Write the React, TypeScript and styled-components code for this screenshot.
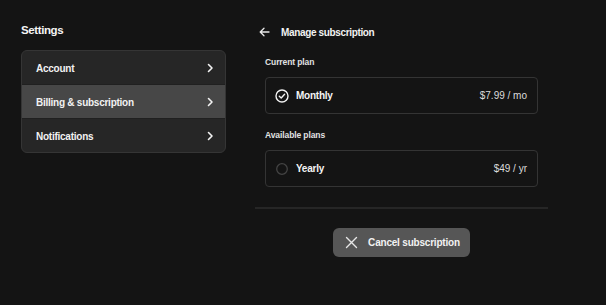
import styled, { createGlobalStyle } from 'styled-components';

const GlobalStyle = createGlobalStyle`
  html, body {
    margin: 0;
    padding: 0;
    background: #141414;
  }
  body {
    font-family: 'Liberation Sans', Arial, sans-serif;
    color: #f2f2f2;
    letter-spacing: -0.25px;
    -webkit-font-smoothing: antialiased;
  }
`;

const Page = styled.div`
  display: flex;
  gap: 29px;
  width: 606px;
  height: 305px;
  box-sizing: border-box;
  padding: 20px 0 0 21px;
  background: #141414;
`;

const Sidebar = styled.aside`
  width: 205px;
  flex-shrink: 0;
`;

const Title = styled.h1`
  margin: 0 0 10px;
  font-size: 11.5px;
  line-height: 20px;
  font-weight: 700;
  letter-spacing: -0.4px;
  color: #f4f4f4;
`;

const Menu = styled.nav`
  display: flex;
  flex-direction: column;
  background: #262626;
  border: 1px solid #353535;
  border-radius: 6px;
  overflow: hidden;
`;

const MenuRow = styled.div<{ $active?: boolean }>`
  display: flex;
  align-items: center;
  justify-content: space-between;
  height: 34px;
  padding: 1px 11px 0 14px;
  box-sizing: border-box;
  background: ${({ $active }) => ($active ? '#474747' : 'transparent')};
  border-top: 1px solid #202020;
  font-size: 10px;
  font-weight: 700;
  color: #f2f2f2;

  &:first-child {
    border-top: none;
    height: 33px;
  }
`;

const Main = styled.main`
  width: 293px;
  flex-shrink: 0;
  display: flex;
  flex-direction: column;
`;

const Header = styled.div`
  display: flex;
  align-items: center;
  gap: 11px;
  height: 24px;
  padding-left: 4px;
  font-size: 10px;
  font-weight: 700;
  letter-spacing: -0.35px;
  color: #f2f2f2;
`;

const Section = styled.section`
  display: flex;
  flex-direction: column;
  padding: 0 10px;
`;

const Label = styled.div<{ $top: number }>`
  margin-top: ${({ $top }) => $top}px;
  margin-bottom: 9px;
  font-size: 8.5px;
  line-height: 12px;
  font-weight: 700;
  letter-spacing: -0.1px;
  color: #e2e2e2;
`;

const PlanCard = styled.div`
  display: flex;
  align-items: center;
  height: 37px;
  box-sizing: border-box;
  padding: 0 10px 0 9px;
  border: 1px solid #343434;
  border-radius: 4px;
`;

const PlanName = styled.span`
  flex: 1;
  margin-left: 7px;
  font-size: 10px;
  font-weight: 700;
  color: #f4f4f4;
`;

const Price = styled.span`
  font-size: 10px;
  letter-spacing: 0;
  color: #dcdcdc;
`;

const Divider = styled.hr`
  width: 100%;
  margin: 20px 0 0;
  border: none;
  height: 2px;
  background: #262626;
`;

const Actions = styled.div`
  display: flex;
  justify-content: center;
  padding-top: 19px;
`;

const CancelButton = styled.button`
  display: flex;
  align-items: center;
  gap: 10px;
  height: 29px;
  padding: 0 10px 0 12px;
  border: none;
  border-radius: 6px;
  background: #565656;
  color: #f2f2f2;
  font-family: inherit;
  font-size: 10px;
  font-weight: 700;
  letter-spacing: -0.2px;
  cursor: pointer;
`;

const Chevron = () => (
  <svg width="8" height="10" viewBox="0 0 8 10" fill="none">
    <path d="M2.5 1.5 6 5 2.5 8.5" stroke="#f2f2f2" strokeWidth="1.6" strokeLinecap="round" strokeLinejoin="round" />
  </svg>
);

const BackArrow = () => (
  <svg width="11" height="10" viewBox="0 0 11 10" fill="none">
    <path d="M10 5H1.5M5 1.2 1.2 5 5 8.8" stroke="#e8e8e8" strokeWidth="1.3" strokeLinecap="round" strokeLinejoin="round" />
  </svg>
);

const CheckCircle = () => (
  <svg width="14" height="14" viewBox="0 0 14 14" fill="none">
    <circle cx="7" cy="7" r="6" stroke="#f2f2f2" strokeWidth="1.4" />
    <path d="M4.3 7.2 6.2 9 9.6 5.2" stroke="#f2f2f2" strokeWidth="1.4" strokeLinecap="round" strokeLinejoin="round" />
  </svg>
);

const Radio = () => (
  <svg width="14" height="14" viewBox="0 0 14 14" fill="none">
    <circle cx="7" cy="7" r="5.3" stroke="#444" strokeWidth="1.3" />
  </svg>
);

const CloseIcon = () => (
  <svg width="13" height="13" viewBox="0 0 13 13" fill="none">
    <path d="M1.5 1.5 11.5 11.5M11.5 1.5 1.5 11.5" stroke="#e6e6e6" strokeWidth="1.4" strokeLinecap="round" />
  </svg>
);

const menuItems = [
  { label: 'Account' },
  { label: 'Billing & subscription', active: true },
  { label: 'Notifications' },
];

const App = () => {
  return (
    <>
      <GlobalStyle />
      <Page>
        <Sidebar>
          <Title>Settings</Title>
          <Menu>
            {menuItems.map((item) => (
              <MenuRow key={item.label} $active={item.active}>
                <span>{item.label}</span>
                <Chevron />
              </MenuRow>
            ))}
          </Menu>
        </Sidebar>

        <Main>
          <Header>
            <BackArrow />
            <span>Manage subscription</span>
          </Header>

          <Section>
            <Label $top={12}>Current plan</Label>
            <PlanCard>
              <CheckCircle />
              <PlanName>Monthly</PlanName>
              <Price>$7.99 / mo</Price>
            </PlanCard>

            <Label $top={15}>Available plans</Label>
            <PlanCard>
              <Radio />
              <PlanName>Yearly</PlanName>
              <Price>$49 / yr</Price>
            </PlanCard>
          </Section>

          <Divider />

          <Actions>
            <CancelButton>
              <CloseIcon />
              Cancel subscription
            </CancelButton>
          </Actions>
        </Main>
      </Page>
    </>
  );
};

export default App;
